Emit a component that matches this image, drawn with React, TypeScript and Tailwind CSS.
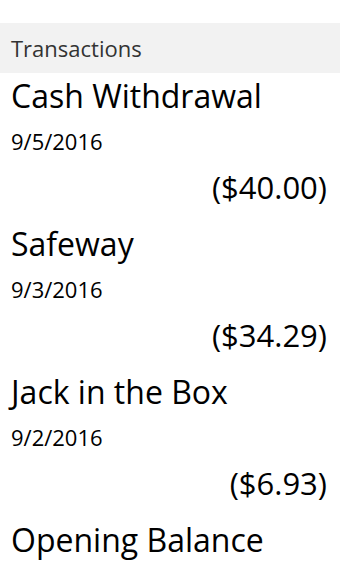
import React from 'react';

interface Transaction {
  id: number;
  name: string;
  date?: string;
  amount?: string;
}

const transactions: Transaction[] = [
  { id: 1, name: 'Cash Withdrawal', date: '9/5/2016', amount: '($40.00)' },
  { id: 2, name: 'Safeway', date: '9/3/2016', amount: '($34.29)' },
  { id: 3, name: 'Jack in the Box', date: '9/2/2016', amount: '($6.93)' },
  { id: 4, name: 'Opening Balance' },
];

export default function App() {
  return (
    <div className="h-[567px] w-[340px] overflow-hidden bg-white pt-[23px] font-['Open_Sans',sans-serif] text-black">
      <div className="flex h-[50px] items-center bg-[#f2f2f2] px-[11px] text-[22px] text-[#333]">
        Transactions
      </div>
      {transactions.map((t) => (
        <div key={t.id} className="flex flex-col px-[11px] pb-[12px]">
          <div className="text-[32px] leading-[45px]">{t.name}</div>
          {t.date && <div className="text-[22px] leading-[47px]">{t.date}</div>}
          {t.amount && <div className="self-end pr-[2px] text-[31px] leading-[44px]">{t.amount}</div>}
        </div>
      ))}
    </div>
  );
}
